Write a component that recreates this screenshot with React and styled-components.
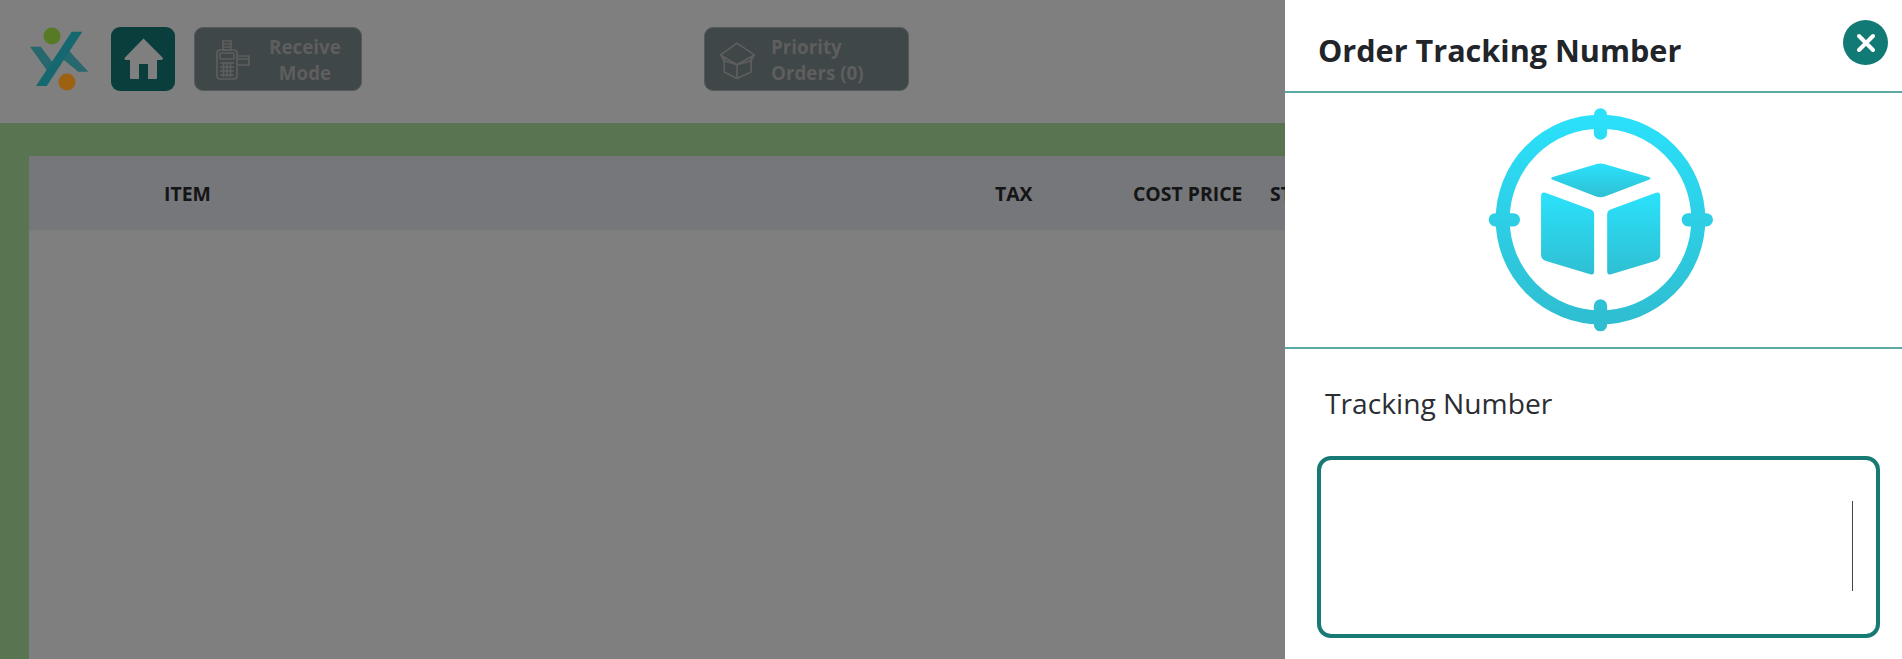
import React from "react";
import styled, { createGlobalStyle } from "styled-components";

const Global = createGlobalStyle`
  html, body { margin: 0; padding: 0; height: 100%; overflow: hidden; background: #fff; }
  body { font-family: "Open Sans", "Noto Sans", "Liberation Sans", sans-serif; }
  * { box-sizing: border-box; }
`;

const Page = styled.div`
  position: relative;
  width: 100vw;
  height: 100vh;
  overflow: hidden;
  display: flex;
  flex-direction: column;
`;

const Header = styled.header`
  height: 123px;
  flex: none;
  background: #fff;
  display: flex;
  align-items: flex-start;
  padding: 27px 0 0 30px;
`;

const LogoBox = styled.div`
  position: relative;
  z-index: 1;
  width: 60px;
  height: 64px;
  margin-right: 21px;
  flex: none;
`;

const HomeButton = styled.button`
  width: 64px;
  height: 64px;
  border: none;
  border-radius: 9px;
  background: #137c78;
  padding: 0;
  margin-right: 19px;
  display: flex;
  align-items: center;
  justify-content: center;
  flex: none;
`;

const ModeButton = styled.button`
  width: ${(p) => p.$w}px;
  height: 64px;
  margin-left: ${(p) => p.$ml || 0}px;
  flex: none;
  border: 1px solid #a9b4b5;
  border-radius: 9px;
  background: #7e8e90;
  color: #bcbcbc;
  font-family: inherit;
  font-weight: 700;
  font-size: 18.8px;
  line-height: 26px;
  padding: 2px 0 0 ${(p) => p.$pl}px;
  display: flex;
  align-items: center;
`;

const ModeLabel = styled.span`
  display: block;
  margin-left: ${(p) => p.$gap}px;
  width: ${(p) => p.$w}px;
  text-align: ${(p) => p.$align};
`;

const Workspace = styled.main`
  flex: 1;
  background: #b2e8a0;
  padding: 33px 0 0 29px;
  min-height: 0;
`;

const Table = styled.section`
  height: 100%;
  background: #fff;
`;

const TableHead = styled.div`
  height: 74px;
  background: #eceef6;
  display: flex;
  align-items: center;
  color: #2b2b2b;
  font-weight: 700;
  font-size: 19.4px;
  padding: 1px 0 0 135px;
  white-space: nowrap;
`;

const HeadCell = styled.div`
  width: ${(p) => p.$w}px;
  flex: none;
`;

const Scrim = styled.div`
  position: absolute;
  inset: 0;
  background: rgba(0, 0, 0, 0.5);
`;

const Drawer = styled.aside`
  position: absolute;
  z-index: 2;
  top: 0;
  right: 0;
  bottom: 0;
  width: 617px;
  background: #fff;
  display: flex;
  flex-direction: column;
`;

const DrawerHeader = styled.div`
  position: relative;
  height: 93px;
  flex: none;
  border-bottom: 2px solid #5aa9a5;
  padding: 30px 0 0 33px;
`;

const Title = styled.h2`
  margin: 0;
  font-size: 30.6px;
  line-height: 40px;
  font-weight: 700;
  color: #212529;
`;

const CloseButton = styled.button`
  position: absolute;
  left: 558px;
  top: 20px;
  width: 45px;
  height: 45px;
  border: none;
  border-radius: 50%;
  background: #127a74;
  padding: 0;
  display: flex;
  align-items: center;
  justify-content: center;
`;

const IconSection = styled.div`
  height: 256px;
  flex: none;
  border-bottom: 2px solid #5aa9a5;
  display: flex;
  justify-content: center;
  padding: 13px 0 0 13px;
`;

const Form = styled.div`
  padding: 34px 0 0 32px;
`;

const Label = styled.label`
  display: block;
  font-size: 28.2px;
  line-height: 40px;
  font-weight: 400;
  color: #2a2e33;
  padding-left: 8px;
`;

const InputBox = styled.div`
  position: relative;
  margin-top: 33px;
  width: 563px;
  height: 182px;
  border: 4px solid #177a74;
  border-radius: 14px;
  background: #fff;
`;

const Caret = styled.span`
  position: absolute;
  left: 531px;
  top: 41px;
  width: 1px;
  height: 90px;
  background: #444;
`;

const Logo = () => (
  <svg width="60" height="64" viewBox="30 27 60 64">
    <path d="M30 46.7 L40.7 46.7 L53.3 63.3 L46.7 70 Z" fill="#27686f" />
    <path d="M68.3 50 L88.3 71.7 L78.3 71.7 L61.7 58.3 Z" fill="#27686f" />
    <path d="M71.7 31.7 L82.3 31.7 L46.7 86 L36 86 Z" fill="#166870" />
    <circle cx="52" cy="36" r="8.5" fill="#577a24" />
    <circle cx="67" cy="82" r="8.5" fill="#9c6212" />
  </svg>
);

const HomeIcon = () => (
  <svg width="42" height="44" viewBox="121 37 42 44">
    <path
      d="M142.5 38.5 L162 58 Q162 60 160 60 L156 60 L156 78 Q156 79 155 79 L147 79 L147 64 L138 64 L138 79 L130 79 Q129 79 129 78 L129 60 L125 60 Q123 60 123.5 58 Z"
      fill="#fff"
    />
  </svg>
);

const PosIcon = () => (
  <svg width="34" height="40" viewBox="0 0 34 40" fill="none" stroke="#bcbcbc" strokeWidth="1.6">
    <rect x="7" y="1" width="8" height="9" />
    <path d="M7 4 H15 M7 7 H15" />
    <rect x="1" y="10" width="20" height="29" rx="3" />
    <rect x="4" y="13" width="14" height="6" rx="1" />
    <path d="M4 23 H18 M4 27 H18 M4 31 H18 M4 35 H18 M7.5 22 V37 M11 22 V37 M14.5 22 V37" />
    <path d="M21 16 H33 V25 H21 M21 19 H33" />
  </svg>
);

const BoxIcon = () => (
  <svg width="36" height="39" viewBox="50 58 110 118" fill="none" stroke="#bcbcbc" strokeWidth="5" strokeLinejoin="round">
    <path d="M105 64 L158 100 L105 130 L55 100 Z" />
    <path d="M66 106 V152 L105 172 L148 152 V106" />
    <path d="M105 130 V172 M55 100 L66 118 L105 130 L148 118 L158 100" />
  </svg>
);

const TrackingIcon = () => (
  <svg width="227" height="227" viewBox="81 33 680 680">
    <defs>
      <linearGradient id="ringGrad" gradientUnits="userSpaceOnUse" x1="0" y1="40" x2="0" y2="708">
        <stop offset="0" stopColor="#2ae2fc" />
        <stop offset="1" stopColor="#2fbccf" />
      </linearGradient>
      <linearGradient id="faceGrad" x1="0" y1="0" x2="0" y2="1">
        <stop offset="0" stopColor="#2ae2fc" />
        <stop offset="1" stopColor="#2fbfd2" />
      </linearGradient>
    </defs>
    <circle cx="421" cy="373" r="293" fill="none" stroke="url(#ringGrad)" strokeWidth="42" />
    <g stroke="url(#ringGrad)" strokeWidth="40" strokeLinecap="round">
      <path d="M421 60 V114 M421 632 V688" />
      <path d="M106 374 H160 M684 374 H738" />
    </g>
    <path
      d="M278 246 L410 207 Q421 204 432 207 L566 246 Q576 250 566 254 L434 304 Q421 309 408 304 L278 254 Q268 250 278 246 Z"
      fill="url(#faceGrad)"
    />
    <path
      d="M243 303 Q243 289 256 293 L390 342 Q402 346 402 358 L402 528 Q402 541 390 537 L258 497 Q243 492 243 480 Z"
      fill="url(#faceGrad)"
    />
    <path
      d="M600 303 Q600 289 587 293 L453 342 Q441 346 441 358 L441 528 Q441 541 453 537 L585 497 Q600 492 600 480 Z"
      fill="url(#faceGrad)"
    />
  </svg>
);

const CloseIcon = () => (
  <svg width="24" height="24" viewBox="0 0 24 24">
    <path d="M5 5 L19 19 M19 5 L5 19" stroke="#fff" strokeWidth="4" strokeLinecap="round" />
  </svg>
);

export default function App() {
  return (
    <Page>
      <Global />
      <Header>
        <LogoBox>
          <Logo />
        </LogoBox>
        <HomeButton aria-label="Home">
          <HomeIcon />
        </HomeButton>
        <ModeButton $w={168} $pl={21}>
          <PosIcon />
          <ModeLabel $gap={12} $w={86} $align="center">Receive Mode</ModeLabel>
        </ModeButton>
        <ModeButton $w={205} $ml={342} $pl={14}>
          <BoxIcon />
          <ModeLabel $gap={16} $w={96} $align="left">Priority Orders (0)</ModeLabel>
        </ModeButton>
      </Header>
      <Workspace>
        <Table>
          <TableHead>
            <HeadCell $w={831}>ITEM</HeadCell>
            <HeadCell $w={138}>TAX</HeadCell>
            <HeadCell $w={137}>COST PRICE</HeadCell>
            <HeadCell $w={100}>STOCK</HeadCell>
          </TableHead>
        </Table>
      </Workspace>
      <Scrim />
      <Drawer>
        <DrawerHeader>
          <Title>Order Tracking Number</Title>
          <CloseButton aria-label="Close">
            <CloseIcon />
          </CloseButton>
        </DrawerHeader>
        <IconSection>
          <TrackingIcon />
        </IconSection>
        <Form>
          <Label>Tracking Number</Label>
          <InputBox>
            <Caret />
          </InputBox>
        </Form>
      </Drawer>
    </Page>
  );
}
